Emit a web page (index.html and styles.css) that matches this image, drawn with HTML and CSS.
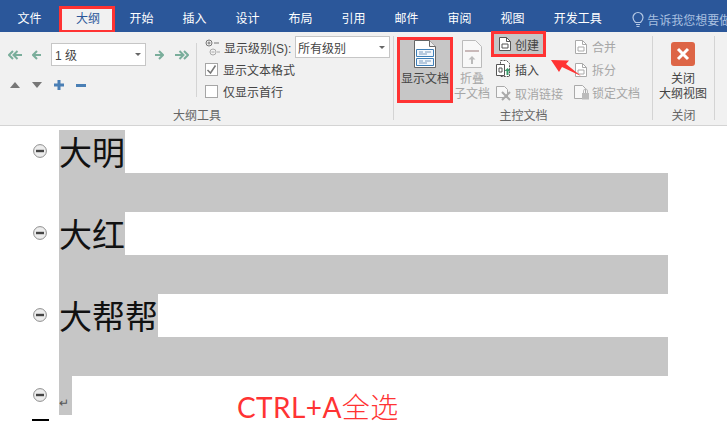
FILE: index.html
```html
<!DOCTYPE html>
<html lang="zh-CN">
<head>
  <meta charset="UTF-8">
  <title>大纲视图</title>
  <link rel="stylesheet" href="styles.css">
</head>
<body>
  <svg class="defs" width="0" height="0">
    <symbol id="bullet" viewBox="0 0 14 14">
      <circle cx="7" cy="7" r="6.4" fill="#ececec" stroke="#8e8e8e"/>
      <rect x="3" y="5.8" width="8" height="2.4" fill="#444"/>
    </symbol>
    <symbol id="page" viewBox="0 0 12 14">
      <path d="M.5.5h7l4 4v9H.5z" fill="#fff" stroke="currentColor"/>
      <path d="M7.5.5v4h4M3 7h6v4H3z" fill="none" stroke="currentColor"/>
    </symbol>
  </svg>

  <div class="tabs">
    <div class="tab tab-file">文件</div>
    <div class="tab tab-active">大纲</div>
    <div class="tab">开始</div>
    <div class="tab">插入</div>
    <div class="tab">设计</div>
    <div class="tab">布局</div>
    <div class="tab">引用</div>
    <div class="tab">邮件</div>
    <div class="tab">审阅</div>
    <div class="tab">视图</div>
    <div class="tab">开发工具</div>
    <div class="tell-me">
      <svg width="12" height="17" viewBox="0 0 12 17">
        <path d="M3.5 11.5C2 10 1 9 1 6.5a5 5 0 0 1 10 0c0 2.500-1 3.500-2.500 5z" fill="none" stroke="#b4c8e4" stroke-width="1.200"/>
        <path d="M4 13.500h4M4.500 15.500h3" stroke="#b4c8e4" stroke-width="1.200"/>
      </svg>
      <span>告诉我您想要做什么</span>
    </div>
  </div>

  <div class="ribbon">
    <!-- 大纲工具 -->
    <div class="group group-outline">
      <div class="group-body">
        <div class="levels">
          <div class="level-row">
            <svg class="ic-dbl" width="14" height="10" viewBox="0 0 14 10"><path d="M5 1 1 5l4 4M9.500 1l-4 4 4 4M5.500 5H14" fill="none" stroke="#7aae9b" stroke-width="2"/></svg>
            <svg class="ic-one" width="9" height="10" viewBox="0 0 9 10"><path d="M5 1 1 5l4 4M1 5h8" fill="none" stroke="#7aae9b" stroke-width="2"/></svg>
            <div class="select select-level"><span>1 级</span><i class="caret"></i></div>
            <svg class="ic-one-r" width="9" height="10" viewBox="0 0 9 10"><path d="M4 1l4 4-4 4M8 5H0" fill="none" stroke="#7aae9b" stroke-width="2"/></svg>
            <svg class="ic-dbl-r" width="14" height="10" viewBox="0 0 14 10"><path d="M9 1l4 4-4 4M4.500 1l4 4-4 4M8.500 5H0" fill="none" stroke="#7aae9b" stroke-width="2"/></svg>
          </div>
          <div class="move-row">
            <svg width="10" height="6" viewBox="0 0 10 6"><path d="M5 0l5 6H0z" fill="#777"/></svg>
            <svg width="10" height="6" viewBox="0 0 10 6"><path d="M0 0h10L5 6z" fill="#777"/></svg>
            <svg width="10" height="10" viewBox="0 0 10 10"><path d="M3.500 0h3v3.500H10v3H6.500V10h-3V6.500H0v-3h3.500z" fill="#4a7fb5"/></svg>
            <svg width="10" height="3" viewBox="0 0 10 3"><path d="M0 0h10v3H0z" fill="#4a7fb5"/></svg>
          </div>
        </div>
        <div class="show-opts">
          <div class="opt-row">
            <svg class="ic-showlevel" width="15" height="17" viewBox="0 0 15 17">
              <circle cx="4" cy="4" r="3" fill="none" stroke="#777"/><path d="M2.500 4h3M4 2.500v3M9 4h5" stroke="#777"/>
              <circle cx="8" cy="13" r="3" fill="none" stroke="#aaa"/><path d="M6.500 13h3M12 13h3" stroke="#aaa"/>
            </svg>
            <span class="opt-label">显示级别(S):</span>
            <div class="select select-show"><span>所有级别</span><i class="caret"></i></div>
          </div>
          <div class="opt-row">
            <span class="check"><svg width="11" height="11" viewBox="0 0 11 11"><path d="M1.500 6l3 3 5-7.500" fill="none" stroke="#777" stroke-width="1.500"/></svg></span>
            <span>显示文本格式</span>
          </div>
          <div class="opt-row">
            <span class="check"></span>
            <span>仅显示首行</span>
          </div>
        </div>
      </div>
      <div class="group-label">大纲工具</div>
    </div>

    <!-- 主控文档 -->
    <div class="group group-master">
      <div class="group-body">
        <div class="big-btn btn-show marked">
          <svg width="22" height="28" viewBox="0 0 22 28">
            <path d="M.5.5h15l6 6v21H.5z" fill="#fff" stroke="#666"/>
            <path d="M15.500.5v6h6" fill="#eee" stroke="#666"/>
            <path d="M2.500 9.500h17v7h-17zM2.500 18.500h17v7h-17z" fill="#f2f7fc" stroke="#3f7fb8"/>
            <path d="M5 12h4M11 12h6M5 14h8M5 21h4M11 21h6M5 23h8" stroke="#7a9cc0"/>
          </svg>
          <span>显示文档</span>
        </div>
        <div class="big-btn btn-collapse off">
          <svg width="20" height="28" viewBox="0 0 20 28">
            <path d="M.5.5h13l6 6v21H.5z" fill="#f8f8f8" stroke="#bbb"/>
            <path d="M3 11h14" stroke="#c9b9b9" stroke-width="2"/>
            <path d="M10 16l3.500 3.500H11V24H9v-4.500H6.500z" fill="#bbb"/>
          </svg>
          <span>折叠<br>子文档</span>
        </div>
        <div class="small-col">
          <div class="small-btn btn-create marked">
            <svg class="ic-page" width="12" height="14"><use href="#page"/></svg>
            <span>创建</span>
          </div>
          <div class="small-btn btn-insert">
            <svg width="15" height="18" viewBox="0 0 15 18">
              <path d="M4.500.5h6l3 3v13h-9z" fill="#fff" stroke="#555" stroke-dasharray="2 1"/>
              <path d="M.5 4.500h8v11h-8z" fill="#fff" stroke="#555"/>
              <path d="M3 8h3v4H3z" fill="none" stroke="#555"/>
              <path d="M11.500 8l3 3h-2v4h-2v-4h-2z" fill="#3a9a6a"/>
            </svg>
            <span>插入</span>
          </div>
          <div class="small-btn btn-unlink off">
            <svg width="15" height="15" viewBox="0 0 15 15">
              <path d="M.5.5h8l3 3v8H.5z" fill="#f8f8f8" stroke="#aaa"/>
              <path d="M6 6l8 8M14 6l-8 8" stroke="#aaa" stroke-width="2"/>
            </svg>
            <span>取消链接</span>
          </div>
        </div>
        <div class="small-col small-col-2 off">
          <div class="small-btn">
            <svg class="ic-page" width="12" height="14"><use href="#page"/></svg>
            <span>合并</span>
          </div>
          <div class="small-btn">
            <svg class="ic-page" width="12" height="14"><use href="#page"/></svg>
            <span>拆分</span>
          </div>
          <div class="small-btn btn-lock">
            <svg width="16" height="15" viewBox="0 0 16 15">
              <path d="M.5.5h8l3 3v10H.5z" fill="#f8f8f8" stroke="#aaa"/>
              <path d="M8 8h7v6.500H8z" fill="#bbb"/>
              <path d="M9.500 8V6a2 2 0 0 1 4 0v2" fill="none" stroke="#bbb"/>
            </svg>
            <span>锁定文档</span>
          </div>
        </div>
      </div>
      <div class="group-label">主控文档</div>
    </div>

    <!-- 关闭 -->
    <div class="group group-close">
      <div class="group-body">
        <div class="big-btn btn-close">
          <svg width="24" height="24" viewBox="0 0 24 24">
            <rect width="24" height="24" rx="3" fill="#dd6546"/>
            <path d="M7 7l10 10M17 7L7 17" stroke="#fff" stroke-width="3"/>
          </svg>
          <span>关闭<br>大纲视图</span>
        </div>
      </div>
      <div class="group-label">关闭</div>
    </div>
  </div>

  <div class="doc">
    <div class="para">
      <svg class="bullet"><use href="#bullet"/></svg>
      <span class="sel heading">大明</span>
    </div>
    <div class="blank"></div>
    <div class="para">
      <svg class="bullet"><use href="#bullet"/></svg>
      <span class="sel heading">大红</span>
    </div>
    <div class="blank"></div>
    <div class="para">
      <svg class="bullet"><use href="#bullet"/></svg>
      <span class="sel heading">大帮帮</span>
    </div>
    <div class="blank"></div>
    <div class="para para-last">
      <svg class="bullet"><use href="#bullet"/></svg>
      <span class="sel mark">↵</span>
    </div>
    <div class="end-bar"></div>
  </div>

  <!-- annotations on top of the screenshot -->
  <svg class="red-arrow" width="32" height="20" viewBox="0 0 32 20">
    <path d="M1 1 19 1.500 16 5 31 17 12 8 9 13z" fill="#f33"/>
  </svg>
  <div class="note">CTRL+A<span class="note-cn">全选</span></div>
</body>
</html>
```

FILE: styles.css
```css
html, body {
  margin: 0;
  padding: 0;
}
body {
  position: relative;
  width: 727px;
  height: 446px;
  overflow: hidden;
  background-color: #fff;
  color: #444;
  font-family: "Liberation Sans", "Noto Sans CJK SC", sans-serif;
  font-size: 12px;
}
.defs {
  position: absolute;
}
svg {
  flex: none;
}

/* tabs */
.tabs {
  display: flex;
  height: 32px;
  background-color: #2b579a;
  color: #fff;
  white-space: nowrap;
}
.tab {
  flex: none;
  padding: 0 14.5px;
  line-height: 38px;
}
.tab-file {
  width: 59px;
  box-sizing: border-box;
  padding: 0;
  text-align: center;
}
.tab-active {
  width: 56px;
  box-sizing: border-box;
  margin-top: 6px;
  padding: 0 0 0 14px;
  background-color: #f1f1f1;
  border: 3px solid #f33;
  border-bottom-width: 2px;
  color: #2b579a;
  line-height: 21px;
}
.tell-me {
  display: flex;
  flex: none;
  align-items: center;
  gap: 3px;
  margin-left: 16px;
  padding-top: 6px;
  color: #a9c0e0;
}

/* ribbon */
.ribbon {
  display: flex;
  height: 93px;
  background-color: #f1f1f1;
  border-bottom: 1px solid #d4d4d4;
}
.group {
  display: flex;
  flex-direction: column;
  position: relative;
}
.group-body {
  display: flex;
  height: 75px;
}
.group-label {
  height: 18px;
  line-height: 18px;
  text-align: center;
  color: #666;
}
.group-outline {
  width: 394px;
}
.group-master {
  width: 259px;
}
.group-close {
  width: 61px;
}
.group-outline::after, .group-master::after, .group-close::after {
  content: "";
  position: absolute;
  right: 0;
  top: 4px;
  bottom: 5px;
  width: 1px;
  background-color: #d4d4d4;
}
.group-close::after {
  right: -1px;
}

/* outline tools */
.levels {
  width: 197px;
  height: 54px;
  margin-top: 11px;
  border-right: 1px solid #d4d4d4;
  box-sizing: border-box;
}
.level-row {
  display: flex;
  align-items: center;
  height: 23px;
  padding-left: 8px;
}
.ic-one, .ic-dbl {
  margin-right: 10px;
}
.ic-one-r {
  margin: 0 11px 0 9px;
}
.move-row {
  display: flex;
  align-items: center;
  gap: 12px;
  height: 12px;
  margin-top: 13px;
  padding-left: 10px;
}
.select {
  display: flex;
  flex: none;
  align-items: center;
  justify-content: space-between;
  box-sizing: border-box;
  background-color: #fff;
  border: 1px solid #c6c6c6;
  padding: 0 4px 0 3px;
}
.select-level {
  width: 95px;
  height: 23px;
}
.select-show {
  width: 95px;
  height: 22px;
  padding-left: 2px;
}
.caret {
  width: 0;
  height: 0;
  border-left: 3px solid transparent;
  border-right: 3px solid transparent;
  border-top: 3px solid #666;
}
.show-opts {
  padding: 4px 0 0 8px;
}
.opt-row {
  display: flex;
  align-items: center;
  height: 22px;
}
.ic-showlevel {
  margin-right: 4px;
}
.opt-label {
  width: 71px;
}
.check {
  display: flex;
  align-items: center;
  justify-content: center;
  box-sizing: border-box;
  width: 13px;
  height: 13px;
  margin-right: 5px;
  background-color: #fff;
  border: 1px solid #a6a6a6;
}

/* master document */
.off {
  color: #a6a6a6;
}
.big-btn {
  display: flex;
  flex: none;
  flex-direction: column;
  align-items: center;
  box-sizing: border-box;
  line-height: 15px;
  text-align: center;
  white-space: nowrap;
}
.big-btn svg {
  margin-bottom: 4px;
}
.marked {
  background-color: #c6c6c6;
  border: 3px solid #f33;
}
.btn-show {
  width: 56px;
  height: 66px;
  margin: 5px 0 0 3px;
}
.btn-collapse {
  width: 36px;
  margin: 8px 1px 0;
}
.small-col {
  flex: none;
  margin-top: -1px;
  width: 55px;
}
.small-btn {
  display: flex;
  align-items: center;
  height: 24px;
  padding-left: 5px;
  white-space: nowrap;
}
.small-btn svg {
  margin-right: 4px;
}
.btn-create {
  box-sizing: border-box;
  height: 26px;
}
.ic-page {
  color: #555;
}
.small-col-2 {
  margin: 3px 0 0 28px;
  width: 70px;
}
.small-col-2 .small-btn {
  height: 23px;
  padding-left: 0;
}
.small-col-2 .small-btn .ic-page {
  margin: 0 5px 0 1px;
  color: #aaa;
}
.small-col-2 .btn-lock svg {
  margin-right: 2px;
}

/* close */
.btn-close {
  width: 60px;
  padding-top: 10px;
}
.btn-close svg {
  margin-bottom: 6px;
}

/* document */
.doc {
  padding-top: 4px;
}
.para {
  display: flex;
  height: 43px;
}
.bullet {
  width: 14px;
  height: 14px;
  margin: 14px 12px 0 33px;
}
.sel {
  background-color: #c6c6c6;
}
.heading {
  color: #111;
  font-family: "Noto Sans CJK SC", serif;
  font-size: 33px;
  line-height: 43px;
}
.blank {
  width: 609px;
  height: 39px;
  margin-left: 59px;
  background-color: #c6c6c6;
}
.para-last {
  height: 39px;
}
.para-last .bullet {
  margin-top: 12px;
}
.mark {
  width: 13px;
  padding-top: 18px;
  box-sizing: border-box;
  color: #555;
  font-size: 12px;
  line-height: 18px;
}
.end-bar {
  width: 17px;
  height: 2px;
  margin: 4px 0 0 32px;
  background-color: #000;
}

/* annotations */
.red-arrow {
  position: absolute;
  left: 550px;
  top: 59px;
}
.note {
  position: absolute;
  left: 237px;
  top: 386px;
  color: #f33;
  font-family: "Lato", "Noto Sans CJK SC", sans-serif;
  font-size: 28px;
  letter-spacing: .4px;
  line-height: 40px;
  white-space: nowrap;
}
.note-cn {
  font-family: "Noto Sans CJK SC", sans-serif;
  font-weight: 300;
}
```
